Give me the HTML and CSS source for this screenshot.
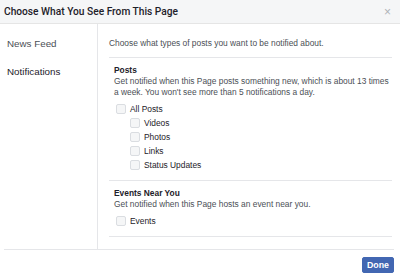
FILE: index.html
```html
<!DOCTYPE html>
<html>
<head>
<meta charset="utf-8">
<link rel="stylesheet" href="styles.css">
</head>
<body>
<div class="dialog">
  <div class="header">
    <div class="title">Choose What You See From This Page</div>
    <div class="close">×</div>
  </div>
  <div class="content">
    <div class="nav">
      <div class="nav-item">News Feed</div>
      <div class="nav-item active">Notifications</div>
    </div>
    <div class="main">
      <div class="intro">Choose what types of posts you want to be notified about.</div>
      <div class="section">
        <div class="sec-title">Posts</div>
        <div class="sec-desc">Get notified when this Page posts something new, which is about 13 times a week. You won't see more than 5 notifications a day.</div>
        <div class="opts">
          <label class="opt"><span class="box"></span>All Posts</label>
          <label class="opt sub"><span class="box"></span>Videos</label>
          <label class="opt sub"><span class="box"></span>Photos</label>
          <label class="opt sub"><span class="box"></span>Links</label>
          <label class="opt sub"><span class="box"></span>Status Updates</label>
        </div>
      </div>
      <div class="section">
        <div class="sec-title">Events Near You</div>
        <div class="sec-desc">Get notified when this Page hosts an event near you.</div>
        <div class="opts">
          <label class="opt"><span class="box"></span>Events</label>
        </div>
      </div>
    </div>
  </div>
  <div class="footer">
    <button class="done">Done</button>
  </div>
</div>
</body>
</html>
```
FILE: styles.css
```css
* { box-sizing: border-box; }
body {
  margin: 0;
  background: #fff;
  font-family: "Liberation Sans", Arial, sans-serif;
  color: #1d2129;
}
.dialog { width: 400px; height: 279px; display: flex; flex-direction: column; }
.header {
  height: 24px;
  flex: none;
  background: #f5f6f7;
  border-bottom: 1px solid #e5e5e5;
  display: flex;
  align-items: center;
  justify-content: space-between;
  padding: 0 9px 0 4px;
}
.title { font-family: Roboto, "Liberation Sans", sans-serif; font-size: 10.2px; font-weight: 500; color: #1d2129; }
.close { font-size: 12px; color: #b0b3b8; }
.content { display: flex; height: 225px; flex: none; }
.nav {
  width: 98px;
  border-right: 1px solid #e5e6e9;
  padding: 13px 0 0 7px;
  display: flex;
  flex-direction: column;
  gap: 15px;
}
.nav-item { font-size: 9.8px; color: #4b4f56; line-height: 13px; }
.nav-item.active { color: #1d2129; }
.main { flex: 1; padding: 13px 8px 0 11px; }
.intro {
  font-size: 8.4px;
  color: #4b4f56;
  line-height: 12px;
  padding-bottom: 8px;
  border-bottom: 1px solid #e5e6e9;
}
.section {
  padding: 7px 0 10px 5px;
  border-bottom: 1px solid #e5e6e9;
}
.sec-title { font-size: 8.4px; font-weight: bold; color: #1d2129; line-height: 11px; }
.sec-desc { font-size: 8.4px; color: #4b4f56; line-height: 11px; }
.opts { display: flex; flex-direction: column; gap: 4px; padding-top: 6px; }
.opt { display: flex; align-items: center; font-size: 8.4px; color: #1d2129; line-height: 10px; }
.opt.sub { padding-left: 14px; }
.box {
  width: 10px;
  height: 10px;
  border: 1px solid #dadde1;
  border-radius: 2px;
  background: #f5f6f7;
  margin: 0 4px 0 2px;
}
.footer {
  margin: 0 6px 0 4px;
  border-top: 1px solid #e5e6e9;
  display: flex;
  justify-content: flex-end;
  padding-top: 7px;
}
.done {
  background: #4267b2;
  border: 1px solid #4267b2;
  color: #fff;
  font-family: "Liberation Sans", Arial, sans-serif;
  font-size: 8.8px;
  font-weight: bold;
  height: 16px;
  width: 32px;
  padding: 0;
  border-radius: 2px;
}
```
